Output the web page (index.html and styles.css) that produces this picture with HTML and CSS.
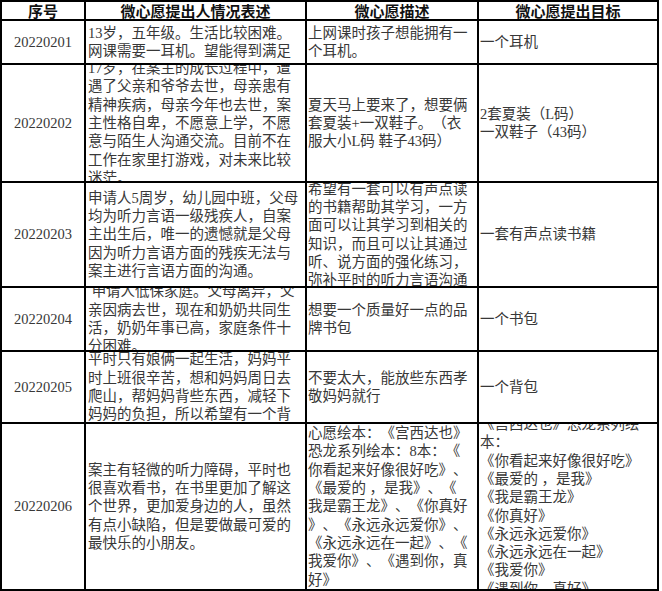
FILE: index.html
```html
<!DOCTYPE html>
<html lang="zh-CN">
<head>
<meta charset="utf-8">
<title>微心愿</title>
<link rel="stylesheet" href="styles.css">
</head>
<body>
<div class="sheet">
  <div class="h">序号</div>
  <div class="h">微心愿提出人情况表述</div>
  <div class="h">微心愿描述</div>
  <div class="h">微心愿提出目标</div>

  <div class="c num">20220201</div>
  <div class="c desc"><div class="t">13岁，五年级。生活比较困难。<br>网课需要一耳机。望能得到满足</div></div>
  <div class="c wish"><div class="t">上网课时孩子想能拥有一<br>个耳机。</div></div>
  <div class="c goal"><div class="t">一个耳机</div></div>

  <div class="c num">20220202</div>
  <div class="c desc"><div class="t">17岁，在案主的成长过程中，遭<br>遇了父亲和爷爷去世，母亲患有<br>精神疾病，母亲今年也去世，案<br>主性格自卑，不愿意上学，不愿<br>意与陌生人沟通交流。目前不在<br>工作在家里打游戏，对未来比较<br>迷茫。</div></div>
  <div class="c wish"><div class="t">夏天马上要来了，想要俩<br>套夏装+一双鞋子。（衣<br>服大小L码 鞋子43码）</div></div>
  <div class="c goal"><div class="t">2套夏装（L码）<br>一双鞋子（43码）</div></div>

  <div class="c num">20220203</div>
  <div class="c desc"><div class="t">申请人5周岁，幼儿园中班，父母<br>均为听力言语一级残疾人，自案<br>主出生后，唯一的遗憾就是父母<br>因为听力言语方面的残疾无法与<br>案主进行言语方面的沟通。</div></div>
  <div class="c wish"><div class="t">希望有一套可以有声点读<br>的书籍帮助其学习，一方<br>面可以让其学习到相关的<br>知识，而且可以让其通过<br>听、说方面的强化练习，<br>弥补平时的听力言语沟通</div></div>
  <div class="c goal"><div class="t">一套有声点读书籍</div></div>

  <div class="c num">20220204</div>
  <div class="c desc"><div class="t">&nbsp;申请人低保家庭。父母离异，父<br>亲因病去世，现在和奶奶共同生<br>活，奶奶年事已高，家庭条件十<br>分困难。</div></div>
  <div class="c wish"><div class="t">想要一个质量好一点的品<br>牌书包</div></div>
  <div class="c goal"><div class="t">一个书包</div></div>

  <div class="c num">20220205</div>
  <div class="c desc"><div class="t">平时只有娘俩一起生活，妈妈平<br>时上班很辛苦，想和妈妈周日去<br>爬山，帮妈妈背些东西，减轻下<br>妈妈的负担，所以希望有一个背</div></div>
  <div class="c wish"><div class="t">不要太大，能放些东西孝<br>敬妈妈就行</div></div>
  <div class="c goal"><div class="t">一个背包</div></div>

  <div class="c num">20220206</div>
  <div class="c desc"><div class="t">案主有轻微的听力障碍，平时也<br>很喜欢看书，在书里更加了解这<br>个世界，更加爱身边的人，虽然<br>有点小缺陷，但是要做最可爱的<br>最快乐的小朋友。</div></div>
  <div class="c wish"><div class="t">心愿绘本：《宫西达也》<br>恐龙系列绘本：8本：《<br>你看起来好像很好吃》、<br>《最爱的 ，是我》、《<br>我是霸王龙》、《你真好<br>》、《永远永远爱你》、<br>《永远永远在一起》、《<br>我爱你》、《遇到你，真<br>好》</div></div>
  <div class="c goal"><div class="t">《宫西达也》恐龙系列绘<br>本：<br>《你看起来好像很好吃》<br>《最爱的 ，是我》<br>《我是霸王龙》<br>《你真好》<br>《永远永远爱你》<br>《永远永远在一起》<br>《我爱你》<br>《遇到你，真好》</div></div>
</div>
</body>
</html>
```

FILE: styles.css
```css
html, body {
  margin: 0;
  padding: 0;
  background: #ffffff;
}

.sheet {
  display: grid;
  grid-template-columns: 82px 219px 170px 178px;
  grid-template-rows: 17px 42px 116px 103px 62px 70px 165px;
  gap: 2px;
  padding: 2px;
  background: #000000;
  width: max-content;
  font-family: "Liberation Serif", "Noto Sans CJK SC", serif;
  text-spacing-trim: space-all;
}

.h {
  background: #ffffff;
  display: flex;
  align-items: center;
  justify-content: center;
  overflow: hidden;
  font-family: "Noto Sans CJK SC", sans-serif;
  font-weight: 700;
  font-size: 15px;
  line-height: 17px;
  color: #111111;
}

.c {
  background: #ffffff;
  display: flex;
  align-items: center;
  overflow: hidden;
  font-size: 14.5px;
  line-height: 18.33px;
  color: #383838;
}

.c .t {
  white-space: nowrap;
}

.num {
  justify-content: center;
}

.desc {
  padding-left: 2px;
}

.wish,
.goal {
  padding-left: 1px;
}
```
